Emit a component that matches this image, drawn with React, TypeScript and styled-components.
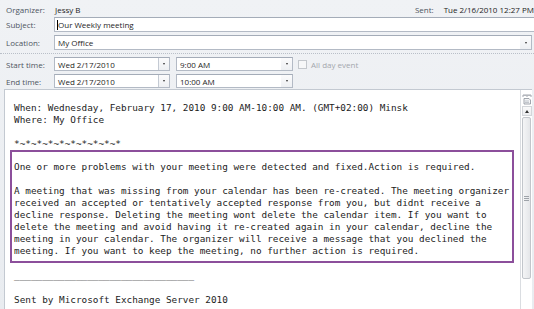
import React from "react";
import styled, { createGlobalStyle } from "styled-components";

const Global = createGlobalStyle`
  html, body { margin: 0; padding: 0; background: #eef0f3; }
  body { width: 534px; height: 309px; overflow: hidden; }
`;

const UI = `"Open Sans", "Noto Sans", sans-serif`;
const MONO = `"DejaVu Sans Mono", "Liberation Mono", monospace`;

const Window = styled.div`
  width: 534px;
  height: 309px;
  display: flex;
  flex-direction: column;
  overflow: hidden;
  background: linear-gradient(#f0f2f5, #e9ecf0);
  font-family: ${UI};
  font-size: 8px;
  color: #1e1e1e;
`;

const Header = styled.div`
  display: flex;
  flex-direction: column;
  padding: 3px 0 1px 6px;
`;

const Row = styled.div<{ $h: number; $mt?: number }>`
  display: flex;
  align-items: center;
  height: ${(p) => p.$h}px;
  margin-top: ${(p) => p.$mt ?? 0}px;
`;

const Label = styled.span`
  width: 48px;
  flex: none;
  color: #4e5561;
`;

const Value = styled.span`
  padding-left: 1px;
  color: #1e1e1e;
  white-space: nowrap;
`;

const SentLabel = styled.span`
  margin-left: auto;
  margin-right: 9px;
  color: #4e5561;
`;

const TextBox = styled.div<{ $mr: number }>`
  flex: 1;
  height: 100%;
  box-sizing: border-box;
  border: 1px solid #b3bac5;
  border-top-color: #a4acb8;
  background: #fff;
  display: flex;
  align-items: center;
  padding-left: 2px;
  margin-right: ${(p) => p.$mr}px;
  white-space: nowrap;
`;

const Caret = styled.span`
  display: inline-block;
  width: 1px;
  height: 10px;
  background: #000;
`;

const Combo = styled.div<{ $w?: number; $ml?: number; $mr?: number }>`
  ${(p) => (p.$w ? `width: ${p.$w}px; flex: none;` : "flex: 1;")}
  margin-left: ${(p) => p.$ml ?? 0}px;
  margin-right: ${(p) => p.$mr ?? 0}px;
  height: 100%;
  box-sizing: border-box;
  border: 1px solid #b3bac5;
  border-top-color: #a4acb8;
  background: #fff;
  display: flex;
  align-items: stretch;
`;

const ComboText = styled.span`
  flex: 1;
  display: flex;
  align-items: center;
  padding-left: 3px;
  white-space: nowrap;
`;

const DropButton = styled.span<{ $line?: boolean }>`
  width: 10px;
  flex: none;
  display: flex;
  align-items: center;
  justify-content: center;
  background: linear-gradient(#fbfbfc, #eef0f3);
  border-left: 1px solid ${(p) => (p.$line ? "#c4cad3" : "transparent")};
  &::after {
    content: "";
    width: 0;
    height: 0;
    border-left: 1.5px solid transparent;
    border-right: 1.5px solid transparent;
    border-top: 2px solid #333;
  }
`;

const DottedRule = styled.div`
  margin: 3px 0 3px -6px;
  height: 0;
  border-top: 1px dotted #b9bfc8;
`;

const Check = styled.span`
  width: 9px;
  height: 9px;
  box-sizing: border-box;
  flex: none;
  margin-left: 5px;
  border: 1px solid #c3c7cc;
  background: #f6f7f8;
`;

const Disabled = styled.span`
  margin-left: 4px;
  color: #a3a7ad;
`;

const BodyPane = styled.div`
  flex: 1;
  display: flex;
  margin: 0 2px 0 4px;
  border-left: 1px solid #c3c9d1;
  border-top: 1px solid #c3c9d1;
  background: #fff;
  min-height: 0;
`;

const Message = styled.div`
  flex: 1;
  display: flex;
  flex-direction: column;
  padding: 12px 0 0 9px;
  font-family: ${MONO};
  font-size: 9.35px;
  line-height: 12px;
  color: #1c1c1c;
`;

const Line = styled.div`
  height: 12px;
  white-space: pre;
`;

const NoticeBox = styled.div`
  margin-left: -4px;
  width: 504px;
  box-sizing: border-box;
  border: 2px solid #8c4f9b;
  padding: 9px 0 4px 2px;
  margin-bottom: 7px;
  display: flex;
  flex-direction: column;
`;

const ScrollBar = styled.div`
  width: 11px;
  flex: none;
  display: flex;
  flex-direction: column;
  align-items: center;
  border-left: 1px solid #dadde1;
  background: #fff;
  padding-top: 4px;
`;

const RulerIcon = styled.svg`
  width: 10px;
  height: 11px;
  flex: none;
`;

const UpButton = styled.span`
  width: 10px;
  height: 10px;
  flex: none;
  margin-top: 1px;
  box-sizing: border-box;
  border: 1px solid #d3d6da;
  background: linear-gradient(#fafafa, #eceef0);
  display: flex;
  align-items: center;
  justify-content: center;
  &::after {
    content: "";
    border-left: 2.5px solid transparent;
    border-right: 2.5px solid transparent;
    border-bottom: 3px solid #333;
  }
`;

const Thumb = styled.span`
  width: 9px;
  height: 162px;
  flex: none;
  margin-top: 1px;
  box-sizing: border-box;
  border: 1px solid #c2c6cb;
  border-radius: 2px;
  background: linear-gradient(to right, #f4f5f6, #e4e6e9);
  display: flex;
  align-items: center;
  justify-content: center;
`;

const Grip = styled.span`
  width: 5px;
  height: 5px;
  background: repeating-linear-gradient(#9ea3a9 0 1px, transparent 1px 2px);
`;

const lines1 = [
  "When: Wednesday, February 17, 2010 9:00 AM-10:00 AM. (GMT+02:00) Minsk",
  "Where: My Office",
];

const boxLines = [
  "One or more problems with your meeting were detected and fixed.Action is required.",
  "",
  "A meeting that was missing from your calendar has been re-created. The meeting organizer",
  "received an accepted or tentatively accepted response from you, but didnt receive a",
  "decline response. Deleting the meeting wont delete the calendar item. If you want to",
  "delete the meeting and avoid having it re-created again in your calendar, decline the",
  "meeting in your calendar. The organizer will receive a message that you declined the",
  "meeting. If you want to keep the meeting, no further action is required.",
];

export default function App() {
  return (
    <>
      <Global />
      <Window>
        <Header>
          <Row $h={13}>
            <Label>Organizer:</Label>
            <Value>Jessy B</Value>
            <SentLabel>Sent:</SentLabel>
            <Value>Tue 2/16/2010 12:27 PM</Value>
          </Row>
          <Row $h={15} $mt={1}>
            <Label>Subject:</Label>
            <TextBox $mr={-2}>
              <Caret />
              Our Weekly meeting
            </TextBox>
          </Row>
          <Row $h={15} $mt={3}>
            <Label>Location:</Label>
            <Combo $mr={2}>
              <ComboText>My Office</ComboText>
              <DropButton />
            </Combo>
          </Row>
          <DottedRule />
          <Row $h={14}>
            <Label>Start time:</Label>
            <Combo $w={116}>
              <ComboText>Wed 2/17/2010</ComboText>
              <DropButton $line />
            </Combo>
            <Combo $w={117} $ml={6}>
              <ComboText>9:00 AM</ComboText>
              <DropButton />
            </Combo>
            <Check />
            <Disabled>All day event</Disabled>
          </Row>
          <Row $h={14} $mt={3}>
            <Label>End time:</Label>
            <Combo $w={116}>
              <ComboText>Wed 2/17/2010</ComboText>
              <DropButton $line />
            </Combo>
            <Combo $w={117} $ml={6}>
              <ComboText>10:00 AM</ComboText>
              <DropButton />
            </Combo>
          </Row>
        </Header>
        <BodyPane>
          <Message>
            {lines1.map((l) => (
              <Line key={l}>{l}</Line>
            ))}
            <Line />
            <Line>*~*~*~*~*~*~*~*~*~*</Line>
            <NoticeBox>
              {boxLines.map((l, i) => (
                <Line key={i}>{l}</Line>
              ))}
            </NoticeBox>
            <Line>________________________________</Line>
            <Line />
            <Line>Sent by Microsoft Exchange Server 2010</Line>
          </Message>
          <ScrollBar>
            <RulerIcon viewBox="0 0 10 11">
              <path d="M1 1h8M1 1v2M3 1v1M5 1v2M7 1v1M9 1v2" stroke="#8a9099" strokeWidth="0.8" fill="none" />
              <path d="M2 4.5h5l1.5 1.5v4H2z" stroke="#8a9099" strokeWidth="0.8" fill="#f4f5f7" />
              <path d="M3 7h4M3 8.5h4" stroke="#a0a6ae" strokeWidth="0.6" />
            </RulerIcon>
            <UpButton />
            <Thumb>
              <Grip />
            </Thumb>
          </ScrollBar>
        </BodyPane>
      </Window>
    </>
  );
}
